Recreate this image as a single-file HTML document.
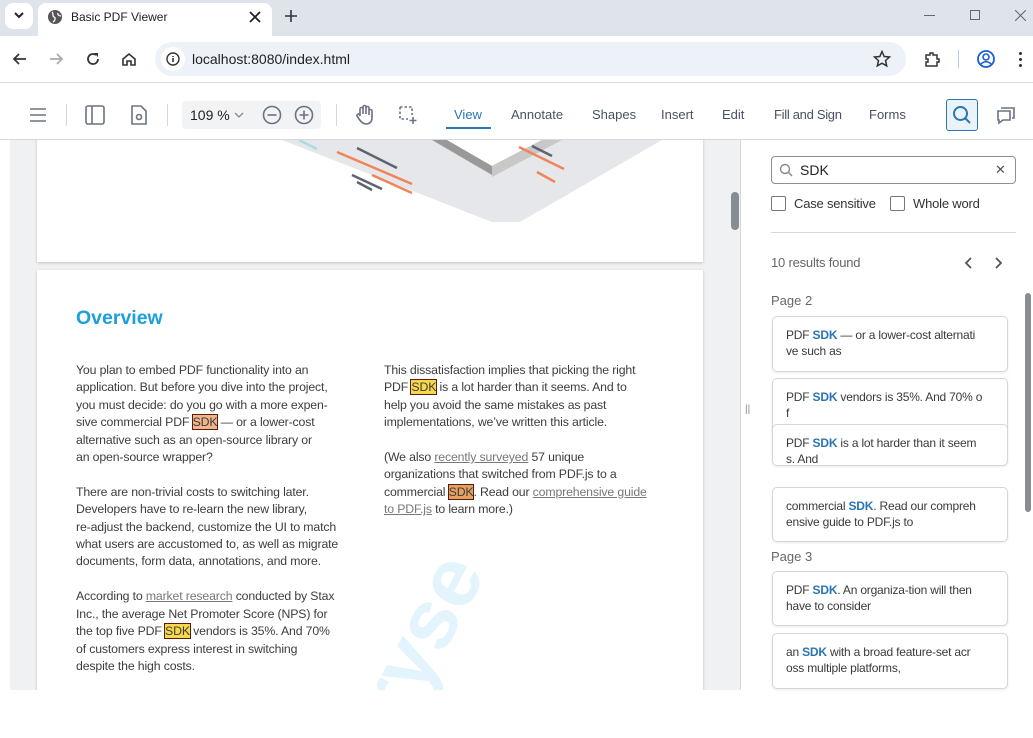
<!DOCTYPE html>
<html><head><meta charset="utf-8"><style>
*{margin:0;padding:0;box-sizing:border-box}
body{width:1033px;height:738px;overflow:hidden;position:relative;background:#fff;font-family:"Liberation Sans",sans-serif;color:#333}
.a{position:absolute}
.tb{font-size:13px;color:#485260}
.p{position:absolute;font-size:12.3px;letter-spacing:-0.15px;line-height:17.4px;color:#3d3d3d;white-space:nowrap}
.hl{background:#f7d84a;outline:1.5px solid #5a1a10;color:#3d3d3d}
.lk{color:#777;text-decoration:underline}
.card{position:absolute;left:772px;width:236px;background:#fff;border:1px solid #d3d6da;border-radius:5px;padding:10px 13px;font-size:12px;letter-spacing:-0.2px;line-height:16px;color:#3a3a3a;box-shadow:0 1px 2px rgba(0,0,0,.08);overflow:hidden;white-space:nowrap}
.card b{color:#2a75b3}
.ic{stroke:#6b7380;fill:none;stroke-width:1.6}
</style></head><body>
<!-- tab bar -->
<div class="a" style="left:0;top:0;width:1033px;height:36px;background:#dfe3ea"></div>
<div class="a" style="left:5px;top:3px;width:28px;height:26px;background:#fff;border-radius:8px"></div>
<svg class="a" style="left:12px;top:10px" width="14" height="10"><path d="M3 3l4 4 4-4" stroke="#222" stroke-width="2" fill="none"/></svg>
<div class="a" style="left:38px;top:3px;width:234px;height:33px;background:#fff;border-radius:8px 8px 0 0"></div>
<svg class="a" style="left:47px;top:9px" width="16" height="16"><circle cx="8" cy="8" r="7" fill="#555"/><path d="M5 3c2 2 0 4 2 5s1 4-1 5M11 4c-1 2 2 3 3 3" stroke="#fff" stroke-width="1.3" fill="none"/></svg>
<div class="a" style="left:71px;top:10px;font-size:12px;color:#222">Basic PDF Viewer</div>
<svg class="a" style="left:249px;top:11px" width="12" height="12"><path d="M1 1l10 10M11 1L1 11" stroke="#222" stroke-width="1.8"/></svg>
<svg class="a" style="left:285px;top:10px" width="12" height="12"><path d="M6 0v12M0 6h12" stroke="#333" stroke-width="1.6"/></svg>
<div class="a" style="left:924px;top:15px;width:11px;height:1px;background:#666"></div>
<div class="a" style="left:970px;top:10px;width:10px;height:10px;border:1px solid #666"></div>
<svg class="a" style="left:1015px;top:10px" width="11" height="11"><path d="M0 0l11 11M11 0L0 11" stroke="#666" stroke-width="1"/></svg>
<!-- address row -->
<svg class="a" style="left:12px;top:51px" width="16" height="16"><path d="M14 8H3M7 3L2 8l5 5" stroke="#333" stroke-width="1.7" fill="none"/></svg>
<svg class="a" style="left:48px;top:51px" width="16" height="16"><path d="M2 8h11M9 3l5 5-5 5" stroke="#aaa" stroke-width="1.7" fill="none"/></svg>
<svg class="a" style="left:85px;top:51px" width="16" height="16"><path d="M13 8a5 5 0 1 1-2-4" stroke="#333" stroke-width="1.8" fill="none"/><path d="M9 2h4v4z" fill="#333"/></svg>
<svg class="a" style="left:121px;top:51px" width="16" height="16"><path d="M2 8l6-5 6 5v6h-4v-4H6v4H2z" stroke="#333" stroke-width="1.6" fill="none"/></svg>
<div class="a" style="left:155px;top:42px;width:751px;height:34px;background:#edf1f8;border-radius:17px"></div>
<div class="a" style="left:161px;top:47px;width:24px;height:24px;background:#fff;border-radius:12px"></div>
<svg class="a" style="left:166px;top:52px" width="14" height="14"><circle cx="7" cy="7" r="6" stroke="#333" stroke-width="1.4" fill="none"/><path d="M7 6v4M7 4v1" stroke="#333" stroke-width="1.6"/></svg>
<div class="a" style="left:192px;top:51px;font-size:14px;color:#222">localhost:8080/index.html</div>
<svg class="a" style="left:873px;top:50px" width="18" height="18"><path d="M9 1.5l2.2 5 5.3.5-4 3.6 1.2 5.3L9 13.2 4.3 15.9l1.2-5.3-4-3.6 5.3-.5z" stroke="#333" stroke-width="1.5" fill="none"/></svg>
<svg class="a" style="left:923px;top:50px" width="18" height="18"><path d="M3 5h4V3h3v2h4v4h2v3h-2v4H3v-4h2V9H3z" stroke="#333" stroke-width="1.5" fill="none"/></svg>
<div class="a" style="left:958px;top:50px;width:1px;height:18px;background:#b7c9e8"></div>
<svg class="a" style="left:976px;top:49px" width="20" height="20"><circle cx="10" cy="10" r="8" stroke="#1a5ed6" stroke-width="1.8" fill="none"/><circle cx="10" cy="8" r="3" stroke="#1a5ed6" stroke-width="1.6" fill="none"/><path d="M5 15c3-3 7-3 10 0" stroke="#1a5ed6" stroke-width="1.6" fill="none"/></svg>
<div class="a" style="left:1019px;top:52px;width:3px;height:3px;background:#333;border-radius:2px;box-shadow:0 6px #333,0 12px #333"></div>
<div class="a" style="left:0;top:82px;width:1033px;height:1px;background:#dadce0"></div>
<!-- toolbar -->
<svg class="a" style="left:29px;top:107px" width="18" height="16"><path d="M1 2h16M1 8h16M1 14h16" class="ic"/></svg>
<div class="a" style="left:66px;top:104px;width:1px;height:22px;background:#d5d8dc"></div>
<svg class="a" style="left:85px;top:105px" width="20" height="20"><rect x="1" y="1" width="18" height="18" rx="2" class="ic" stroke-width="1.8"/><path d="M7 1v18" class="ic" stroke-width="1.8"/></svg>
<svg class="a" style="left:130px;top:105px" width="18" height="20"><path d="M2 1h9l5 5v13H2z" class="ic"/><circle cx="9" cy="12" r="2.5" class="ic"/></svg>
<div class="a" style="left:167px;top:104px;width:1px;height:22px;background:#d5d8dc"></div>
<div class="a" style="left:182px;top:101px;width:139px;height:28px;background:#f1f3f5;border-radius:4px"></div>
<div class="a" style="left:190px;top:107px;font-size:14px;color:#222">109 %</div>
<svg class="a" style="left:234px;top:111px" width="10" height="8"><path d="M1 2l4 4 4-4" stroke="#888" stroke-width="1.3" fill="none"/></svg>
<svg class="a" style="left:262px;top:105px" width="20" height="20"><circle cx="10" cy="10" r="8.5" class="ic" stroke-width="1.8"/><path d="M5.5 10h9" class="ic" stroke-width="1.8"/></svg>
<svg class="a" style="left:294px;top:105px" width="20" height="20"><circle cx="10" cy="10" r="8.5" class="ic" stroke-width="1.8"/><path d="M5.5 10h9M10 5.5v9" class="ic" stroke-width="1.8"/></svg>
<div class="a" style="left:336px;top:104px;width:1px;height:22px;background:#d5d8dc"></div>
<svg class="a" style="left:355px;top:104px" width="20" height="22"><path d="M5 12V5a1.5 1.5 0 0 1 3 0v5V3a1.5 1.5 0 0 1 3 0v7V4a1.5 1.5 0 0 1 3 0v7-4a1.5 1.5 0 0 1 3 0v7c0 4-3 6-6 6s-5-2-7-5l-2-3a1.5 1.5 0 0 1 2.5-1.5z" class="ic"/></svg>
<svg class="a" style="left:398px;top:105px" width="20" height="20"><path d="M2 2h12v8M2 2v12h8" class="ic" stroke-dasharray="2.5 2"/><path d="M15 12v7M11.5 15.5h7" class="ic"/></svg>
<div class="a tb" style="left:454px;top:107px;color:#2a75b3;font-size:13px">View</div>
<div class="a" style="left:446px;top:127px;width:45px;height:2px;background:#2a75b3"></div>
<div class="a tb" style="left:511px;top:107px">Annotate</div>
<div class="a tb" style="left:592px;top:107px">Shapes</div>
<div class="a tb" style="left:661px;top:107px">Insert</div>
<div class="a tb" style="left:722px;top:107px">Edit</div>
<div class="a tb" style="left:774px;top:107px;letter-spacing:-0.3px">Fill and Sign</div>
<div class="a tb" style="left:869px;top:107px">Forms</div>
<div class="a" style="left:946px;top:99px;width:32px;height:32px;border:1px solid #2a75b3;border-radius:3px;background:#eaf2fa"></div>
<svg class="a" style="left:952px;top:105px" width="20" height="20"><circle cx="8.5" cy="8.5" r="6.5" stroke="#2a75b3" stroke-width="2" fill="none"/><path d="M13 13l5 5" stroke="#2a75b3" stroke-width="2"/></svg>
<svg class="a" style="left:996px;top:105px" width="20" height="20"><path d="M5 3h13v10h-2M2 6h12v9H7l-4 3v-3H2z" class="ic"/></svg>
<div class="a" style="left:0;top:139px;width:1033px;height:1px;background:#d5d8dc"></div>
<!-- document area -->
<div class="a" style="left:10px;top:140px;width:730px;height:550px;background:#f0f1f3;overflow:hidden">
 <div class="a" style="left:27px;top:-10px;width:666px;height:132px;background:#fff;box-shadow:0 1px 3px rgba(0,0,0,.2)">
  <svg class="a" style="left:0;top:0" width="666" height="132"><polygon points="245,10 625,10 483,92 455,92" fill="#e5e7ea"/><polygon points="395,10 455,45 520,10" fill="#999"/><polygon points="410,10 455,36 505,10" fill="#fff"/><polygon points="455,45 455,36 505,10 525,10 455,47" fill="#c8c8c8"/>
  <g stroke-width="2.5"><path d="M300 22l75 32M335 45l40 18M482 17l45 22M500 42l18 10" stroke="#f08559"/><path d="M320 18l40 20M315 45l30 14M320 52l15 8M495 16l20 10" stroke="#5c6470"/><path d="M262 10l18 9" stroke="#a8dde3"/></g></svg>
 </div>
 <div class="a" style="left:27px;top:130px;width:666px;height:430px;background:#fff;box-shadow:0 1px 3px rgba(0,0,0,.2);overflow:hidden">
  <div class="a" style="left:39px;top:37px;font-size:19.5px;font-weight:bold;color:#1ba0dc">Overview</div>
  <div class="a" style="left:300px;top:420px;font-size:84px;font-weight:bold;color:#e3f4fd;transform:rotate(-62deg);transform-origin:left top">ryse</div>
  <div class="p" style="left:39px;top:92px">You plan to embed PDF functionality into an<br>application. But before you dive into the project,<br>you must decide: do you go with a more expen-<br>sive commercial PDF <span class="hl" style="background:#f2b48a">SDK</span> — or a lower-cost<br>alternative such as an open-source library or<br>an open-source wrapper?<br><br>There are non-trivial costs to switching later.<br>Developers have to re-learn the new library,<br>re-adjust the backend, customize the UI to match<br>what users are accustomed to, as well as migrate<br>documents, form data, annotations, and more.<br><br>According to <span class="lk">market research</span> conducted by Stax<br>Inc., the average Net Promoter Score (NPS) for<br>the top five PDF <span class="hl">SDK</span> vendors is 35%. And 70%<br>of customers express interest in switching<br>despite the high costs.</div>
  <div class="p" style="left:347px;top:92px">This dissatisfaction implies that picking the right<br>PDF <span class="hl">SDK</span> is a lot harder than it seems. And to<br>help you avoid the same mistakes as past<br>implementations, we’ve written this article.<br><br>(We also <span class="lk">recently surveyed</span> 57 unique<br>organizations that switched from PDF.js to a<br>commercial <span class="hl" style="background:#e8a060">SDK</span>. Read our <span class="lk">comprehensive guide</span><br><span class="lk">to PDF.js</span> to learn more.)</div>
 </div>
</div>
<div class="a" style="left:731px;top:192px;width:8px;height:38px;background:#888d94;border-radius:4px"></div>
<div class="a" style="left:745px;top:404px;font-size:10px;color:#888">||</div>
<div class="a" style="left:740px;top:140px;width:1px;height:550px;background:#d5d8dc"></div>
<!-- sidebar -->
<div class="a" style="left:771px;top:156px;width:245px;height:28px;border:1px solid #8a9099;border-radius:4px"></div>
<svg class="a" style="left:779px;top:163px" width="14" height="14"><circle cx="6" cy="6" r="4.5" stroke="#888" stroke-width="1.4" fill="none"/><path d="M9.5 9.5l3.5 3.5" stroke="#888" stroke-width="1.4"/></svg>
<div class="a" style="left:800px;top:162px;font-size:14px;color:#222">SDK</div>
<div class="a" style="left:995px;top:162px;font-size:13px;color:#555">✕</div>
<div class="a" style="left:771px;top:196px;width:15px;height:15px;border:1px solid #777;border-radius:2px"></div>
<div class="a" style="left:794px;top:196px;font-size:13px;color:#333;letter-spacing:-0.2px">Case sensitive</div>
<div class="a" style="left:890px;top:196px;width:15px;height:15px;border:1px solid #777;border-radius:2px"></div>
<div class="a" style="left:913px;top:196px;font-size:13px;color:#333;letter-spacing:-0.2px">Whole word</div>
<div class="a" style="left:771px;top:232px;width:245px;height:1px;background:#d5d8dc"></div>
<div class="a" style="left:771px;top:255px;font-size:13px;color:#666;letter-spacing:-0.2px">10 results found</div>
<svg class="a" style="left:962px;top:256px" width="40" height="14"><path d="M9 2L4 7l5 5M34 2l5 5-5 5" stroke="#555" stroke-width="1.8" fill="none"/></svg>
<div class="a" style="left:771px;top:293px;font-size:13px;color:#666">Page 2</div>
<div class="card" style="top:316px;height:56px">PDF <b>SDK</b> — or a lower-cost alternati<br>ve such as</div>
<div class="card" style="top:378px;height:56px">PDF <b>SDK</b> vendors is 35%. And 70% o<br>f</div>
<div class="card" style="top:424px;height:42px">PDF <b>SDK</b> is a lot harder than it seem<br>s. And</div>
<div class="card" style="top:487px;height:55px">commercial <b>SDK</b>. Read our compreh<br>ensive guide to PDF.js to</div>
<div class="a" style="left:771px;top:549px;font-size:13px;color:#666">Page 3</div>
<div class="card" style="top:571px;height:55px">PDF <b>SDK</b>. An organiza-tion will then<br>have to consider</div>
<div class="card" style="top:633px;height:56px">an <b>SDK</b> with a broad feature-set acr<br>oss multiple platforms,</div>
<div class="a" style="left:1025px;top:293px;width:6px;height:219px;background:#888d94;border-radius:3px"></div>
</body></html>
